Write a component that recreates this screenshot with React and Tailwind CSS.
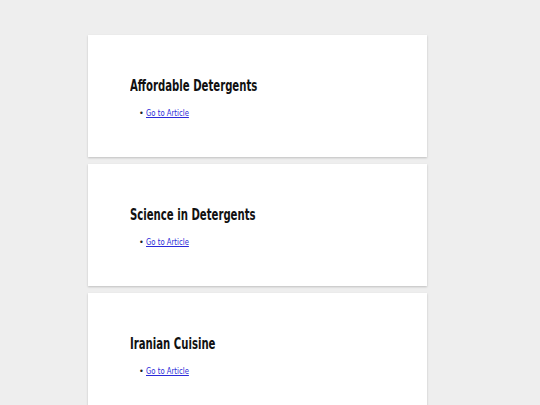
export default function App() {
  const items = ["Affordable Detergents", "Science in Detergents", "Iranian Cuisine"];
  return (
    <div className="min-h-[405px] bg-[#eeeeee] pt-[35px] font-['DejaVu_Sans_Condensed','DejaVu_Sans',sans-serif]">
      <div className="ml-[88px] w-[339px] flex flex-col gap-[7px]">
        {items.map((t) => (
          <div key={t} className="bg-white h-[122px] shadow-[0_1px_2px_rgba(0,0,0,0.2)] pl-[42px] pt-[42px]">
            <h2 className="text-[15px] font-bold text-[#111] leading-[19px]">
              <span className="inline-block origin-left scale-x-[0.75] whitespace-nowrap">{t}</span>
            </h2>
            <ul className="pl-[9px] mt-[11px] text-[9px] leading-[12px] text-[#222]">
              <li className="flex items-center">
                <span className="w-[7px] text-[9px] leading-[12px]">•</span>
                <a href="#" className="inline-block origin-left scale-x-[0.85] whitespace-nowrap text-[#2a2ad8] underline">Go to Article</a>
              </li>
            </ul>
          </div>
        ))}
      </div>
    </div>
  );
}
